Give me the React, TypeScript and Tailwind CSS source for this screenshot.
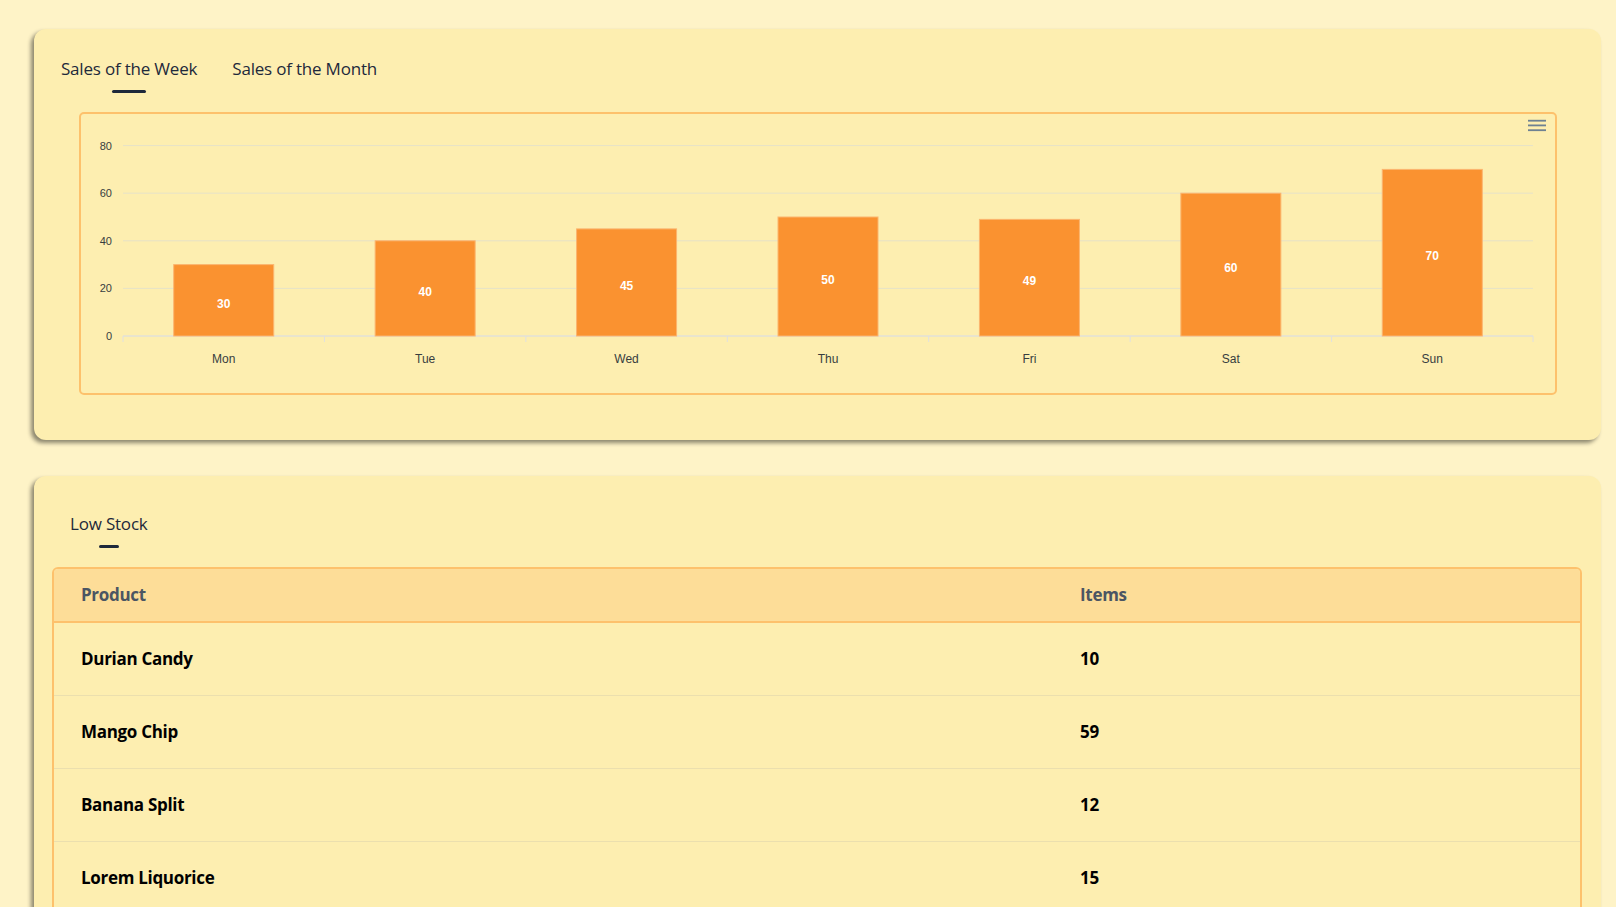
import React from "react";

const days = ["Mon", "Tue", "Wed", "Thu", "Fri", "Sat", "Sun"];
const values = [30, 40, 45, 50, 49, 60, 70];

const W = 1474;
const H = 279;
const PL = 42;
const PR = 1452;
const Y0 = 222;
const UNIT = 2.38;
const CW = (PR - PL) / 7;

function Chart() {
  return (
    <svg width={W} height={H} viewBox={`0 0 ${W} ${H}`} className="block">
      {[0, 20, 40, 60, 80].map((v) => {
        const y = Y0 - v * UNIT;
        return (
          <g key={v}>
            <line x1={PL} x2={PR} y1={y} y2={y} stroke="#e6e2c8" strokeWidth={1} />
            <text
              x={31}
              y={y + 4}
              textAnchor="end"
              fontFamily="'Liberation Sans', Arial, sans-serif"
              fontSize={11}
              fill="#373d3f"
            >
              {v}
            </text>
          </g>
        );
      })}
      <line x1={PL} x2={PR} y1={Y0} y2={Y0} stroke="#e0e0e0" strokeWidth={1} />
      {Array.from({ length: 8 }).map((_, i) => {
        const x = PL + i * CW;
        return <line key={i} x1={x} x2={x} y1={Y0} y2={Y0 + 6} stroke="#e0e0e0" strokeWidth={1} />;
      })}
      {values.map((v, i) => {
        const cx = PL + (i + 0.5) * CW;
        const top = Y0 - v * UNIT;
        const mid = (top + Y0) / 2;
        return (
          <g key={i}>
            <rect
              x={cx - 50}
              y={top}
              width={100}
              height={Y0 - top}
              fill="#fa9230"
              stroke="#fbb56f"
              strokeWidth={1}
            />
            <text
              x={cx}
              y={mid + 7.5}
              textAnchor="middle"
              fontFamily="'Liberation Sans', Arial, sans-serif"
              fontSize={12}
              fontWeight={700}
              fill="#ffffff"
            >
              {v}
            </text>
            <text
              x={cx}
              y={249}
              textAnchor="middle"
              fontFamily="'Liberation Sans', Arial, sans-serif"
              fontSize={12}
              fill="#373d3f"
            >
              {days[i]}
            </text>
          </g>
        );
      })}
      <g fill="#6e8192">
        <rect x={1447} y={5.8} width={18} height={1.8} />
        <rect x={1447} y={10.5} width={18} height={1.8} />
        <rect x={1447} y={15.3} width={18} height={1.8} />
      </g>
    </svg>
  );
}

const rows = [
  ["Durian Candy", "10"],
  ["Mango Chip", "59"],
  ["Banana Split", "12"],
  ["Lorem Liquorice", "15"],
];

export default function App() {
  return (
    <div
      className="h-[907px] overflow-hidden bg-[#fef3c7] pt-[29px] pl-[34px] pr-[15px]"
      style={{ fontFamily: "'Open Sans', 'Noto Sans', sans-serif" }}
    >
      <section className="rounded-xl bg-[#fdeeb0] shadow-[-3px_3px_4px_rgba(0,0,0,0.45)] pt-[28px] pb-[45px]">
        <div className="flex gap-[35px] pl-[27px]">
          <div className="flex flex-col items-center">
            <span className="text-[17px] leading-[24px] text-[#1e293b] tracking-[-0.2px]">Sales of the Week</span>
            <span className="mt-[9px] h-[3px] w-[34px] rounded-full bg-[#1e293b]" />
          </div>
          <div className="flex flex-col items-center">
            <span className="text-[17px] leading-[24px] text-[#1e293b] tracking-[-0.2px]">Sales of the Month</span>
          </div>
        </div>
        <div className="mr-[44px] ml-[45px] mt-[19px] rounded-[5px] border-2 border-[#fdc16c]">
          <Chart />
        </div>
      </section>

      <section className="mt-[36px] rounded-xl bg-[#fdeeb0] shadow-[-3px_3px_4px_rgba(0,0,0,0.45)] pt-[36px] pb-[40px] pl-[18px] pr-[19px]">
        <div className="flex flex-col items-center w-fit ml-[18px]">
          <span className="text-[17px] leading-[24px] text-[#1e293b] tracking-[-0.2px]">Low Stock</span>
          <span className="mt-[9px] h-[3px] w-[20px] rounded-full bg-[#1e293b]" />
        </div>
        <div className="mt-[19px] rounded-[6px] border-2 border-[#fdc16c] overflow-hidden">
          <div className="grid grid-cols-[999px_1fr] h-[54px] items-center bg-[#fddd98] border-b-2 border-[#fdc16c] text-[17px] tracking-[-0.3px] font-bold text-[#4b5563]">
            <div className="pl-[27px]">Product</div>
            <div className="pl-[27px]">Items</div>
          </div>
          {rows.map(([p, n]) => (
            <div
              key={p}
              className="grid grid-cols-[999px_1fr] h-[73px] items-center border-b border-[#ebdfae] text-[17px] tracking-[-0.3px] font-bold text-black"
            >
              <div className="pl-[27px]">{p}</div>
              <div className="pl-[27px]">{n}</div>
            </div>
          ))}
        </div>
      </section>
    </div>
  );
}
